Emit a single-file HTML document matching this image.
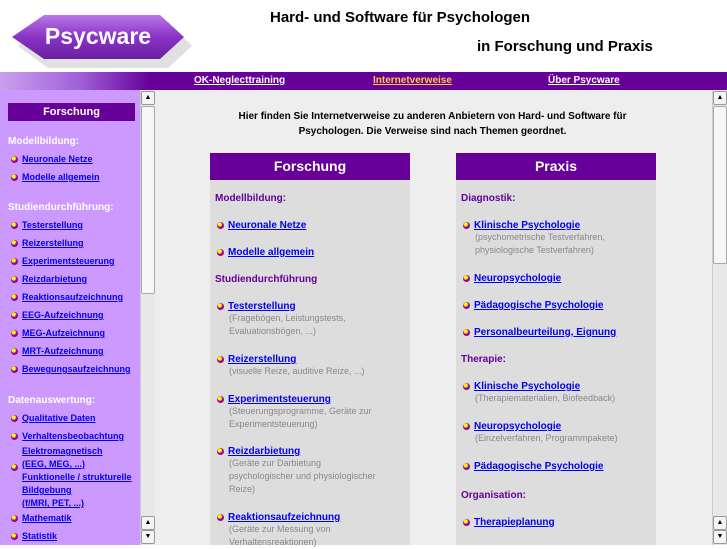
<!DOCTYPE html>
<html><head><meta charset="utf-8"><style>
*{margin:0;padding:0;box-sizing:border-box}
body{width:727px;height:545px;overflow:hidden;background:#fff;font-family:"Liberation Sans",sans-serif;position:relative}
.abs{position:absolute}
a{color:#0000ee;text-decoration:underline;font-weight:bold}
.sb{position:absolute;width:15px;background:#e8e8e8;border-left:1px solid #ccc}
.btn{position:absolute;left:0;width:14px;height:14px;background:#f4f4f4;border:1px solid #999;border-radius:2px;font-size:7px;text-align:center;line-height:12px;color:#000}
.thumb{position:absolute;left:0;width:14px;background:#f6f6f6;border:1px solid #aaa;border-radius:2px}
.left{position:absolute;left:0;top:90px;width:140px;height:455px;background:#cc99ff}
.lh{color:#fff;font-weight:bold;font-size:10px;position:absolute;left:8px}
.li{position:absolute;left:11px;font-size:9px;line-height:14px}
.li a{font-size:9px}
.dot{display:inline-block;width:7px;height:7px;border-radius:50%;background:radial-gradient(circle at 40% 35%,#ff0 0 25%,#909 45%);margin-right:4px;vertical-align:-1px}
.box{position:absolute;width:200px;background:#ddd}
.bh{background:#660099;color:#fff;font-weight:bold;font-size:14px;text-align:center;height:27px;line-height:27px}
.bt{position:absolute;color:#660099;font-weight:bold;font-size:10px;left:5px}
.bi{position:absolute;left:7px;font-size:10px}
.bi a{font-size:10px}
.sub{display:block;color:#888;font-size:9px;line-height:13px;padding-left:12px;font-weight:normal}
</style></head><body>
<svg class="abs" style="left:8px;top:12px" width="185" height="56">
<defs><linearGradient id="g" x1="0" y1="0" x2="0" y2="1"><stop offset="0" stop-color="#b877e6"/><stop offset=".5" stop-color="#8a33c7"/><stop offset="1" stop-color="#6a1fa0"/></linearGradient></defs>
<polygon points="10,34 40,10 160,10 184,34 160,56 40,56" fill="#ccc" opacity=".6"/>
<polygon points="4,25 36,3 152,3 176,25 152,47 36,47" fill="url(#g)"/>
<text x="90" y="32" text-anchor="middle" font-family="Liberation Sans" font-weight="bold" font-size="23" fill="#fff">Psycware</text>
</svg>
<div class="abs" style="left:270px;top:9px;font-size:15px;font-weight:bold">Hard- und Software für Psychologen</div>
<div class="abs" style="left:477px;top:38px;font-size:15px;font-weight:bold">in Forschung und Praxis</div>
<div class="abs" style="left:0;top:72px;width:727px;height:18px;background:linear-gradient(90deg,#c9a0ee 0,#a060d8 80px,#660099 150px,#660099)"></div>
<a class="abs" style="left:194px;top:75px;color:#fff;font-size:10px">OK-Neglecttraining</a>
<a class="abs" style="left:373px;top:75px;color:#ffcc33;font-size:10px">Internetverweise</a>
<a class="abs" style="left:548px;top:75px;color:#fff;font-size:10px">Über Psycware</a>
<div class="left">
<div class="abs" style="left:8px;top:13px;width:127px;height:18px;background:#660099;color:#fff;font-weight:bold;font-size:11px;text-align:center;line-height:18px">Forschung</div>
<div class="lh" style="top:46px">Modellbildung:</div>
<div class="li" style="top:62px"><span class="dot"></span><a>Neuronale Netze</a></div>
<div class="li" style="top:80px"><span class="dot"></span><a>Modelle allgemein</a></div>
<div class="lh" style="top:112px">Studiendurchführung:</div>
<div class="li" style="top:128px"><span class="dot"></span><a>Testerstellung</a></div>
<div class="li" style="top:146px"><span class="dot"></span><a>Reizerstellung</a></div>
<div class="li" style="top:164px"><span class="dot"></span><a>Experimentsteuerung</a></div>
<div class="li" style="top:182px"><span class="dot"></span><a>Reizdarbietung</a></div>
<div class="li" style="top:200px"><span class="dot"></span><a>Reaktionsaufzeichnung</a></div>
<div class="li" style="top:218px"><span class="dot"></span><a>EEG-Aufzeichnung</a></div>
<div class="li" style="top:236px"><span class="dot"></span><a>MEG-Aufzeichnung</a></div>
<div class="li" style="top:254px"><span class="dot"></span><a>MRT-Aufzeichnung</a></div>
<div class="li" style="top:272px"><span class="dot"></span><a>Bewegungsaufzeichnung</a></div>
<div class="lh" style="top:305px">Datenauswertung:</div>
<div class="li" style="top:321px"><span class="dot"></span><a>Qualitative Daten</a></div>
<div class="li" style="top:339px"><span class="dot"></span><a>Verhaltensbeobachtung</a></div>
<div class="li" style="top:355px;padding-left:11px;line-height:13px"><span class="dot" style="position:absolute;left:0;top:19px"></span><a>Elektromagnetisch<br>(EEG, MEG, ...)</a><br><a>Funktionelle / strukturelle<br>Bildgebung<br>(f/MRI, PET, ...)</a></div>
<div class="li" style="top:421px"><span class="dot"></span><a>Mathematik</a></div>
<div class="li" style="top:439px"><span class="dot"></span><a>Statistik</a></div>
</div>
<div class="abs" style="left:155px;top:90px;width:557px;height:455px;background:#eeeeee"></div>
<div class="sb" style="left:140px;top:90px;height:455px"><div class="btn" style="top:1px">▲</div><div class="thumb" style="top:16px;height:188px"></div><div class="btn" style="top:426px">▲</div><div class="btn" style="top:440px">▼</div></div>
<div class="sb" style="left:712px;top:90px;height:455px"><div class="btn" style="top:1px">▲</div><div class="thumb" style="top:16px;height:158px"></div><div class="btn" style="top:426px">▲</div><div class="btn" style="top:440px">▼</div></div>
<div class="abs" style="left:160px;top:109px;width:545px;text-align:center;font-size:10px;font-weight:bold;line-height:15px">Hier finden Sie Internetverweise zu anderen Anbietern von Hard- und Software für<br>Psychologen. Die Verweise sind nach Themen geordnet.</div>
<div class="box" style="left:210px;top:153px;height:392px"><div class="bh">Forschung</div>
<div class="bt" style="top:40px">Modellbildung:</div>
<div class="bi" style="top:67px"><span class="dot"></span><a>Neuronale Netze</a></div>
<div class="bi" style="top:94px"><span class="dot"></span><a>Modelle allgemein</a></div>
<div class="bt" style="top:121px">Studiendurchführung</div>
<div class="bi" style="top:148px"><span class="dot"></span><a>Testerstellung</a><span class="sub">(Fragebögen, Leistungstests,<br>Evaluationsbögen, ...)</span></div>
<div class="bi" style="top:201px"><span class="dot"></span><a>Reizerstellung</a><span class="sub">(visuelle Reize, auditive Reize, ...)</span></div>
<div class="bi" style="top:241px"><span class="dot"></span><a>Experimentsteuerung</a><span class="sub">(Steuerungsprogramme, Geräte zur<br>Experimentsteuerung)</span></div>
<div class="bi" style="top:293px"><span class="dot"></span><a>Reizdarbietung</a><span class="sub">(Geräte zur Darbietung<br>psychologischer und physiologischer<br>Reize)</span></div>
<div class="bi" style="top:359px"><span class="dot"></span><a>Reaktionsaufzeichnung</a><span class="sub">(Geräte zur Messung von<br>Verhaltensreaktionen)</span></div>
</div>
<div class="box" style="left:456px;top:153px;height:392px"><div class="bh">Praxis</div>
<div class="bt" style="top:40px">Diagnostik:</div>
<div class="bi" style="top:67px"><span class="dot"></span><a>Klinische Psychologie</a><span class="sub">(psychometrische Testverfahren,<br>physiologische Testverfahren)</span></div>
<div class="bi" style="top:120px"><span class="dot"></span><a>Neuropsychologie</a></div>
<div class="bi" style="top:147px"><span class="dot"></span><a>Pädagogische Psychologie</a></div>
<div class="bi" style="top:174px"><span class="dot"></span><a>Personalbeurteilung, Eignung</a></div>
<div class="bt" style="top:201px">Therapie:</div>
<div class="bi" style="top:228px"><span class="dot"></span><a>Klinische Psychologie</a><span class="sub">(Therapiematerialien, Biofeedback)</span></div>
<div class="bi" style="top:268px"><span class="dot"></span><a>Neuropsychologie</a><span class="sub">(Einzelverfahren, Programmpakete)</span></div>
<div class="bi" style="top:308px"><span class="dot"></span><a>Pädagogische Psychologie</a></div>
<div class="bt" style="top:337px">Organisation:</div>
<div class="bi" style="top:364px"><span class="dot"></span><a>Therapieplanung</a></div>
</div>
</body></html>
